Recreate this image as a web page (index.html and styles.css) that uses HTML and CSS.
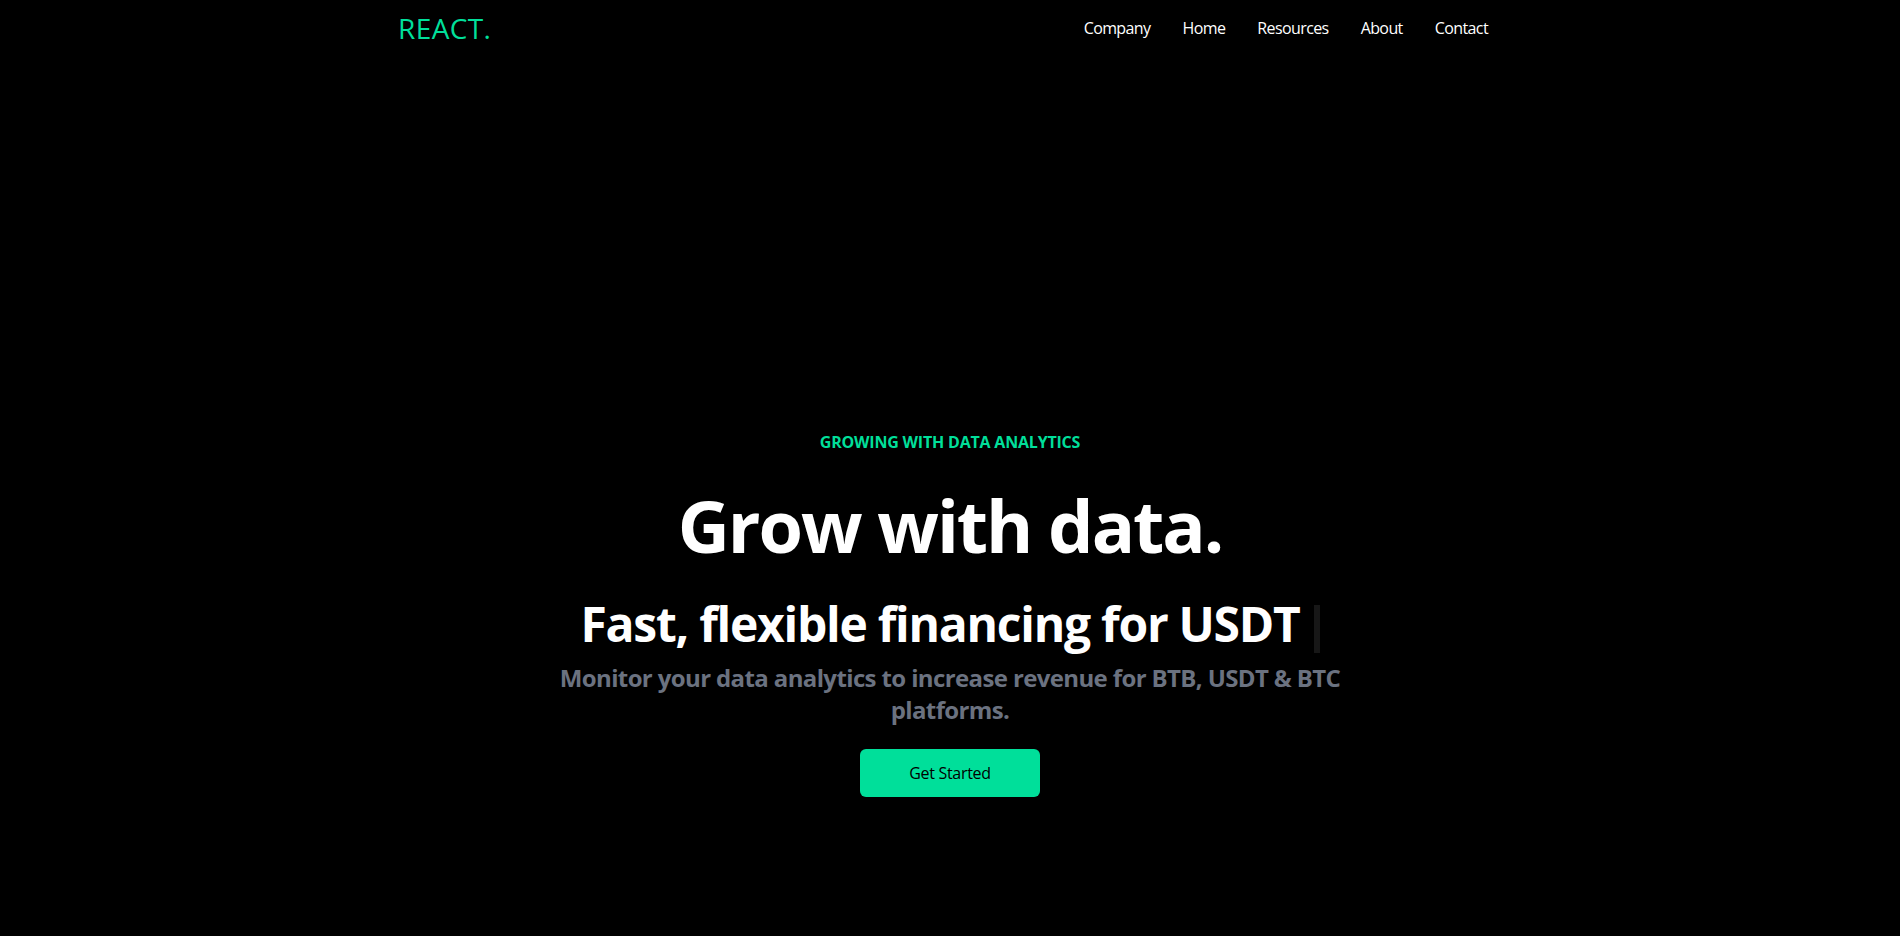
FILE: index.html
```html
<!DOCTYPE html>
<html lang="en">
<head>
<meta charset="utf-8">
<title>REACT.</title>
<link rel="stylesheet" href="styles.css">
</head>
<body>
<header class="navbar">
  <h1 class="logo">REACT.</h1>
  <ul class="nav-links">
    <li>Company</li>
    <li>Home</li>
    <li>Resources</li>
    <li>About</li>
    <li>Contact</li>
  </ul>
</header>
<main class="hero">
  <p class="eyebrow">GROWING WITH DATA ANALYTICS</p>
  <h2 class="headline">Grow with data.</h2>
  <div class="typed-row">
    <p class="typed-static">Fast, flexible financing for</p>
    <span class="typed-word">USDT</span><span class="typed-cursor"></span>
  </div>
  <p class="lead">Monitor your data analytics to increase revenue for BTB, USDT &amp; BTC platforms.</p>
  <button class="cta">Get Started</button>
</main>
</body>
</html>
```
FILE: styles.css
```css
* { box-sizing: border-box; }
html, body { margin: 0; padding: 0; }
body {
  background: #000;
  color: #fff;
  font-family: "Open Sans", "Noto Sans", sans-serif;
  overflow: hidden;
}
.navbar {
  max-width: 1140px;
  margin: 0 auto;
  padding: 0 16px;
  height: 56px;
  display: flex;
  justify-content: space-between;
  align-items: center;
}
.logo {
  margin: 0;
  padding-left: 2px;
  font-size: 28px;
  line-height: 36px;
  font-weight: 400;
  color: #00df9a;
  letter-spacing: 0.4px;
}
.nav-links {
  display: flex;
  list-style: none;
  margin: 0;
  padding: 0;
  align-self: flex-start;
}
.nav-links li {
  padding: 16px;
  font-size: 16px;
  line-height: 24px;
  letter-spacing: -0.6px;
  color: #fff;
}
.hero {
  max-width: 800px;
  min-height: calc(100vh - 56px);
  margin: 0 auto;
  padding-top: 249px;
  display: flex;
  flex-direction: column;
  justify-content: center;
  text-align: center;
}
.eyebrow {
  margin: 0;
  padding: 10px 8px 6px;
  font-size: 16px;
  line-height: 24px;
  font-weight: 700;
  color: #00df9a;
  letter-spacing: -0.2px;
}
.headline {
  margin: 0;
  padding: 29px 0 19px;
  font-size: 72px;
  line-height: 72px;
  font-weight: 700;
  letter-spacing: -0.028em;
}
.typed-row {
  display: flex;
  justify-content: center;
  align-items: center;
  padding: 20px 0 14px;
  font-size: 48px;
  line-height: 48px;
  font-weight: 700;
  letter-spacing: -0.026em;
}
.typed-static { margin: 0; }
.typed-word { padding-left: 11px; }
.typed-cursor {
  display: inline-block;
  width: 6px;
  height: 48px;
  margin-left: 14px;
  background: #171717;
  transform: translateY(5px);
}
.lead {
  margin: 0;
  font-size: 24px;
  line-height: 32px;
  font-weight: 700;
  color: #6b7280;
  letter-spacing: -0.026em;
}
.cta {
  width: 180px;
  margin: 23px auto 24px;
  padding: 12px 0;
  border: none;
  border-radius: 6px;
  background: #00df9a;
  color: #000;
  font-family: inherit;
  font-size: 16px;
  line-height: 24px;
  font-weight: 500;
  letter-spacing: -0.3px;
}
```
